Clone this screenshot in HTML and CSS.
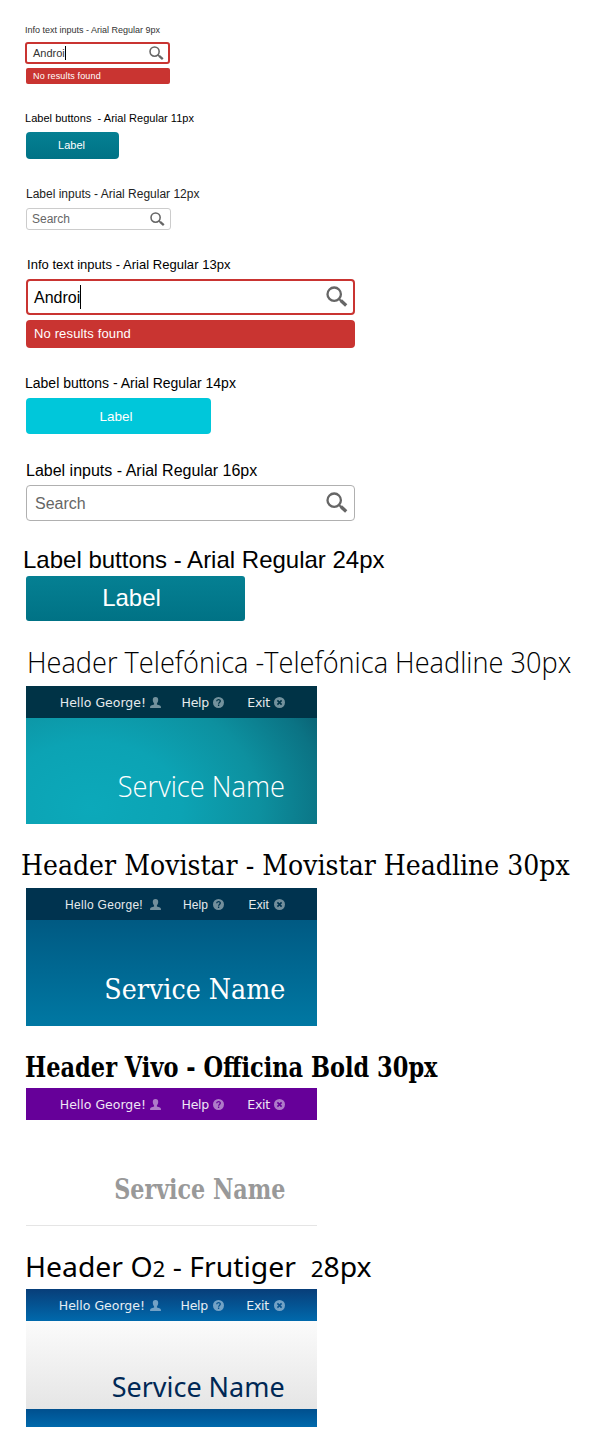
FILE: index.html
```html
<!DOCTYPE html>
<html lang="en">
<head>
<meta charset="utf-8">
<title>Typography</title>
<link rel="stylesheet" href="styles.css">
</head>
<body>
<svg class="defs" width="0" height="0">
  <symbol id="search" viewBox="0 0 22 22"><circle cx="8.200" cy="8.200" r="6.700" fill="none" stroke="#666" stroke-width="2.300"/><path d="M13 13l2.200 2" stroke="#666" stroke-width="2"/><path d="M14.800 14.600L20.200 19.400" stroke="#666" stroke-width="3.400" stroke-linecap="butt"/></symbol>
  <symbol id="user" viewBox="0 0 11 11"><path d="M5.500 0C7.500 0 8.300 1.200 8.200 3c0 1.600-.7 2.600-1.300 3.400v1.200L10 8.400Q11 8.800 11 11H0Q0 8.800 1 8.400L4.100 7.600V6.400C3.500 5.600 2.800 4.600 2.800 3 2.700 1.200 3.500 0 5.500 0z" fill="currentColor"/></symbol>
  <symbol id="help" viewBox="0 0 11 11"><circle cx="5.500" cy="5.500" r="5.500" fill="currentColor"/><path d="M3.700 4.300C3.700 2 7.300 2 7.300 4.100c0 1.300-1.700 1.300-1.700 2.600M5.600 7.600v1.300" fill="none" stroke="var(--bar)" stroke-width="1.300"/></symbol>
  <symbol id="exit" viewBox="0 0 11 11"><circle cx="5.500" cy="5.500" r="5.500" fill="currentColor"/><path d="M3.400 3.400l4.200 4.200M7.600 3.400L3.400 7.600" stroke="var(--bar)" stroke-width="1.600"/></symbol>
</svg>
<main>
  <section class="s1">
    <p class="label">Info text inputs - Arial Regular 9px</p>
    <div class="input small error"><span class="value">Androi</span><i class="caret"></i><svg class="glass"><use href="#search"/></svg></div>
    <div class="message small">No results found</div>
  </section>
  <section class="s2">
    <p class="label">Label buttons&nbsp; - Arial Regular 11px</p>
    <div class="button">Label</div>
  </section>
  <section class="s3">
    <p class="label">Label inputs - Arial Regular 12px</p>
    <div class="input small"><span class="value">Search</span><svg class="glass"><use href="#search"/></svg></div>
  </section>
  <section class="s4">
    <p class="label">Info text inputs - Arial Regular 13px</p>
    <div class="input error"><span class="value">Androi</span><i class="caret"></i><svg class="glass"><use href="#search"/></svg></div>
    <div class="message">No results found</div>
  </section>
  <section class="s5">
    <p class="label">Label buttons - Arial Regular 14px</p>
    <div class="button">Label</div>
  </section>
  <section class="s6">
    <p class="label">Label inputs - Arial Regular 16px</p>
    <div class="input"><span class="value">Search</span><svg class="glass"><use href="#search"/></svg></div>
  </section>
  <section class="s7">
    <p class="label">Label buttons - Arial Regular 24px</p>
    <div class="button">Label</div>
  </section>
  <section class="brand telefonica">
    <h2>Header Telefónica -Telefónica Headline 30px</h2>
    <div class="header">
      <nav><a><span>Hello George!</span><svg><use href="#user"/></svg></a><a><span>Help</span><svg><use href="#help"/></svg></a><a><span>Exit</span><svg><use href="#exit"/></svg></a></nav>
      <div class="body"><span class="service">Service Name</span></div>
    </div>
  </section>
  <section class="brand movistar">
    <h2>Header Movistar - Movistar Headline 30px</h2>
    <div class="header">
      <nav><a><span>Hello George!</span><svg><use href="#user"/></svg></a><a><span>Help</span><svg><use href="#help"/></svg></a><a><span>Exit</span><svg><use href="#exit"/></svg></a></nav>
      <div class="body"><span class="service">Service Name</span></div>
    </div>
  </section>
  <section class="brand vivo">
    <h2>Header Vivo - Officina Bold 30px</h2>
    <div class="header">
      <nav><a><span>Hello George!</span><svg><use href="#user"/></svg></a><a><span>Help</span><svg><use href="#help"/></svg></a><a><span>Exit</span><svg><use href="#exit"/></svg></a></nav>
      <div class="body"><span class="service">Service Name</span></div>
    </div>
  </section>
  <section class="brand o2">
    <h2>Header O<span class="old">2</span> - Frutiger&nbsp; <span class="old">2</span>8px</h2>
    <div class="header">
      <nav><a><span>Hello George!</span><svg><use href="#user"/></svg></a><a><span>Help</span><svg><use href="#help"/></svg></a><a><span>Exit</span><svg><use href="#exit"/></svg></a></nav>
      <div class="body"><span class="service">Service Name</span></div>
      <div class="foot"></div>
    </div>
  </section>
</main>
</body>
</html>
```
FILE: styles.css
```css
* { box-sizing: border-box; }
body { margin: 0; background: #fff; color: #000; font-family: "Liberation Sans", Arial, sans-serif; }
main { padding: 21px 0 10px 26px; overflow: hidden; }
.defs { display: block; height: 0; }
p, h2 { margin: 0; white-space: nowrap; font-weight: 400; }
.label { line-height: 18px; width: max-content; }

.input { display: flex; align-items: center; width: 329px; height: 36px; border: 1px solid #b0b0b0; border-radius: 4px; padding: 0 6px 0 8px; font-size: 16px; color: #666; background: #fff; }
.input .value { padding-top: 1px; }
.input.error { border: 2px solid #c93431; color: #000; padding: 0 5px 0 6px; }
.glass { width: 22px; height: 22px; margin-left: auto; }
.caret { width: 1px; height: 24px; background: #000; }
.message { width: 329px; height: 28px; margin-top: 5px; padding-left: 8px; border-radius: 4px; background: #c93431; color: #fff; font-size: 13px; letter-spacing: .14px; line-height: 28px; }
.input.small { width: 145px; height: 22px; border-color: #ccc; border-radius: 3px; padding: 0 5px; font-size: 12px; }
.input.small .value { padding-top: 0; }
.input.small.error { margin-left: -1px; border-color: #c93431; font-size: 11px; padding: 0 4px 0 6px; color: #333; }
.small .glass { width: 15px; height: 15px; }
.small .caret { height: 14px; }
.message.small { width: 144px; height: 16px; margin-top: 4px; padding-left: 7px; border-radius: 2px; font-size: 9px; line-height: 16px; }
.button { display: flex; align-items: center; justify-content: center; color: #fff; border-radius: 4px; background: linear-gradient(#058093, #007285); }

.s1 .label { font-size: 9px; margin: 0 0 3px -1px; color: #333; }
.s2 { margin-top: 25px; }
.s2 .label { font-size: 11px; margin: 0 0 5px -1px; letter-spacing: .03px; }
.s2 .button { width: 93px; height: 27px; font-size: 11px; padding: 0 2px 1px 0; }
.s3 { margin-top: 26px; }
.s3 .label { font-size: 12px; margin-bottom: 5px; color: #222; }
.s4 { margin-top: 25px; }
.s4 .label { font-size: 13px; line-height: 20px; margin: 0 0 4px 1px; letter-spacing: .03px; }
.s5 { margin-top: 25px; }
.s5 .label { font-size: 14px; line-height: 20px; margin: 0 0 5px -1px; }
.s5 .button { width: 185px; height: 36px; font-size: 13.5px; padding-right: 5px; background: #00c7da; }
.s6 { margin-top: 27px; }
.s6 .label { font-size: 16px; line-height: 20px; margin-bottom: 4px; }
.s7 { margin-top: 25px; }
.s7 .label { font-size: 24px; line-height: 28px; margin: 0 0 2px -3px; }
.s7 .button { width: 219px; height: 45px; font-size: 24px; padding: 0 8px 2px 0; border-radius: 3px; }

.brand h2 { width: max-content; transform-origin: left; }
.header { width: 291px; height: 138px; }
nav { display: flex; justify-content: flex-end; height: 32px; padding-right: 32px; background: var(--bar); color: #fff; font: 12.5px/32px "DejaVu Sans", sans-serif; }
nav a { display: flex; align-items: center; justify-content: flex-end; width: 61px; }
nav a:nth-child(1) { width: 110px; }
nav a:nth-child(2) { width: 63px; }
nav span { opacity: .9; white-space: nowrap; padding-top: 1px; }
nav a:nth-child(n+2) span { letter-spacing: -.25px; }
nav svg { width: 11px; height: 11px; margin: 1px 0 0 4px; color: var(--icon); }
.body { display: flex; justify-content: flex-end; height: 106px; padding-right: 32px; }
.service { height: 40px; white-space: nowrap; transform-origin: right; }

.telefonica { margin-top: 21px; --bar: #003346; --icon: #73929d; }
.telefonica h2 { font: 300 29px/40px "Open Sans", sans-serif; margin: 0 0 4px 1px; transform: scaleX(.937); }
.telefonica .body { padding-top: 48px; color: #fff; background: radial-gradient(ellipse 260px 190px at 65px 90px, #0ca9ba 0%, #0ca3b4 35%, #0d909f 65%, #0b7384 90%, #0a6274 100%); }
.telefonica .service { font: 300 29px/40px "Open Sans", sans-serif; transform: scaleX(.94); }

.movistar { margin-top: 22px; --bar: #00334f; --icon: #738f9c; }
.movistar h2 { font: 28px/40px "DejaVu Serif", serif; margin: 0 0 2px -5px; transform: scaleX(.901); }
.movistar nav { font: 12px/32px "Liberation Sans", sans-serif; letter-spacing: .3px; }
.movistar nav a:first-child svg { margin-left: 7px; }
.movistar nav a:nth-child(n+2) span { letter-spacing: .1px; }
.movistar nav svg { margin-left: 5px; }
.movistar .body { padding-top: 50px; color: #fff; background: linear-gradient(#005a83, #0078a3); }
.movistar .service { font: 28px/40px "DejaVu Serif", serif; transform: scaleX(.908); }

.vivo { margin-top: 22px; --bar: #660099; --icon: #ae7bc9; }
.vivo h2 { font: bold 28px/40px "DejaVu Serif", serif; margin-left: -1px; transform: scaleX(.803); }
.vivo .body { padding-top: 50px; color: #999; border-bottom: 1px solid #e5e5e5; }
.vivo .service { font: bold 28px/40px "DejaVu Serif", serif; transform: scaleX(.795); }

.o2 { margin-top: 20px; --bar: #07538f; --icon: #74a2c6; }
.o2 h2 { font: 28px/40px "Noto Sans", sans-serif; margin: 0 0 3px -1px; transform: scaleX(1.013); }
.o2 .old { font-size: 22px; line-height: 1; }
.o2 nav { background: linear-gradient(#083e79, #0069ac); }
.o2 nav svg { margin-left: 5px; }
.o2 .body { height: 88px; padding-top: 45px; color: #002855; background: linear-gradient(#fbfbfb, #e5e5e5); }
.o2 .service { font: 28px/40px "Noto Sans", sans-serif; transform: scaleX(.963); }
.o2 .foot { height: 18px; background: linear-gradient(#004f8e, #0069ac); }
```
